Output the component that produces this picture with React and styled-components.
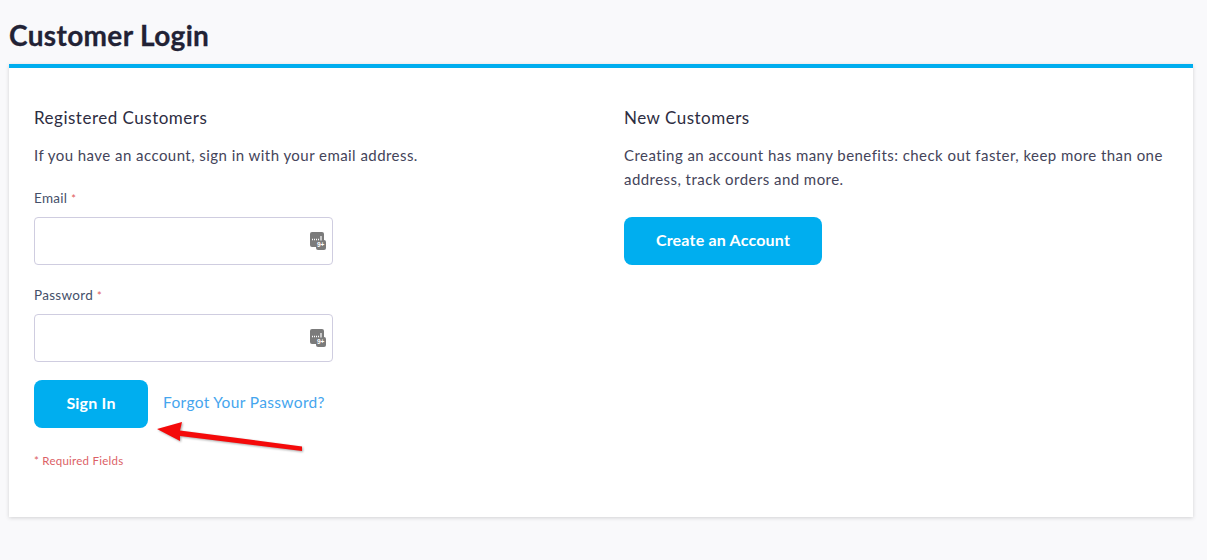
import React from 'react';
import styled, { createGlobalStyle } from 'styled-components';

const GlobalStyle = createGlobalStyle`
  html, body {
    margin: 0;
    padding: 0;
    background: #f9f9fb;
    font-family: Lato, "Liberation Sans", sans-serif;
    color: #2d2d42;
  }
`;

const Page = styled.div`
  width: 1207px;
  height: 560px;
  padding: 0 14px 0 9px;
  box-sizing: border-box;
  overflow: hidden;
`;

const Title = styled.h1`
  margin: 0;
  height: 64px;
  padding-top: 18px;
  box-sizing: border-box;
  font-size: 28px;
  line-height: 34px;
  font-weight: 700;
  color: #222235;
  letter-spacing: 0.35px;
  -webkit-text-stroke: 0.3px #222235;
`;

const Card = styled.div`
  position: relative;
  height: 453px;
  box-sizing: border-box;
  border-top: 4px solid #00aeef;
  background: #fff;
  box-shadow: 0 1px 4px rgba(0, 0, 0, 0.16);
  padding: 38px 25px 0;
  display: grid;
  grid-template-columns: 590px 1fr;
`;

const Column = styled.section`
  display: flex;
  flex-direction: column;
  align-items: flex-start;
`;

const Heading = styled.h2`
  margin: 0 0 13px;
  font-size: 17px;
  line-height: 24px;
  font-weight: 400;
  letter-spacing: 0.5px;
  color: #2d2d42;
`;

const Text = styled.p`
  margin: 0 0 ${(p) => p.$gap}px;
  width: 545px;
  font-size: 15px;
  line-height: 24px;
  letter-spacing: 0.45px;
  color: #44445a;
`;

const Field = styled.div`
  & + & {
    margin-top: 22px;
  }
`;

const Label = styled.label`
  display: block;
  margin-bottom: 10px;
  font-size: 13.5px;
  line-height: 17px;
  letter-spacing: 0.3px;
  color: #45506a;
`;

const Star = styled.span`
  margin-left: 4px;
  font-size: 11px;
  color: #e05a5a;
`;

const InputBox = styled.div`
  position: relative;
  width: 299px;
  height: 48px;
  box-sizing: border-box;
  border: 1px solid #cfcde0;
  border-radius: 4px;
  background: #fff;
`;

const KeyIcon = styled.svg`
  position: absolute;
  top: 14px;
  right: 4px;
`;

const Actions = styled.div`
  display: flex;
  align-items: center;
  gap: 15px;
  margin-top: 18px;
`;

const Button = styled.button`
  height: 48px;
  width: ${(p) => p.$width}px;
  border: 0;
  border-radius: 8px;
  background: #00aeef;
  color: #fff;
  font-family: inherit;
  font-size: 16px;
  font-weight: 700;
  letter-spacing: 0.2px;
  padding: 0 0 4px;
`;

const ForgotLink = styled.a`
  font-size: 15.5px;
  letter-spacing: 0.35px;
  color: #45a5ee;
  text-decoration: none;
  margin-top: -4px;
`;

const Required = styled.div`
  margin-top: 25px;
  font-size: 11.5px;
  line-height: 16px;
  letter-spacing: 0.25px;
  color: #dc5f66;
`;

const Arrow = styled.svg`
  position: absolute;
  left: 146px;
  top: 351px;
  filter: drop-shadow(1px 1px 1px rgba(0, 0, 0, 0.35));
`;

const BadgeText = styled.text`
  font-family: "Liberation Sans", sans-serif;
  font-size: 6.5px;
  font-weight: 700;
  fill: #fff;
`;

const PasswordIcon = () => (
  <KeyIcon width="18" height="18" viewBox="0 0 18 18">
    <rect x="0" y="0" width="14" height="15" rx="2" fill="#7b7b7b" />
    <rect x="6" y="8" width="10" height="10" rx="2" fill="#7b7b7b" />
    <path d="M2 7.5h1M4 7.5h1M6 7.5h1M8 7.5h1" stroke="#fff" strokeWidth="1.4" fill="none" />
    <path d="M11 4v4.5" stroke="#fff" strokeWidth="1.2" fill="none" />
    <BadgeText x="7" y="15">9+</BadgeText>
  </KeyIcon>
);

const App = () => {
  return (
    <Page>
      <GlobalStyle />
      <Title>Customer Login</Title>
      <Card>
        <Column>
          <Heading>Registered Customers</Heading>
          <Text $gap={23}>If you have an account, sign in with your email address.</Text>
          <Field>
            <Label>Email<Star>*</Star></Label>
            <InputBox><PasswordIcon /></InputBox>
          </Field>
          <Field>
            <Label>Password<Star>*</Star></Label>
            <InputBox><PasswordIcon /></InputBox>
          </Field>
          <Actions>
            <Button $width={114}>Sign In</Button>
            <ForgotLink href="#">Forgot Your Password?</ForgotLink>
          </Actions>
          <Required>* Required Fields</Required>
        </Column>
        <Column>
          <Heading>New Customers</Heading>
          <Text $gap={26}>Creating an account has many benefits: check out faster, keep more than one address, track orders and more.</Text>
          <Button $width={198}>Create an Account</Button>
        </Column>
        <Arrow width="150" height="36" viewBox="0 0 150 36">
          <path d="M2 10 L27 3 L25 11.5 L147 27.5 L147 32 L25 17 L25 22 Z" fill="#f40a0a" />
        </Arrow>
      </Card>
    </Page>
  );
};

export default App;
